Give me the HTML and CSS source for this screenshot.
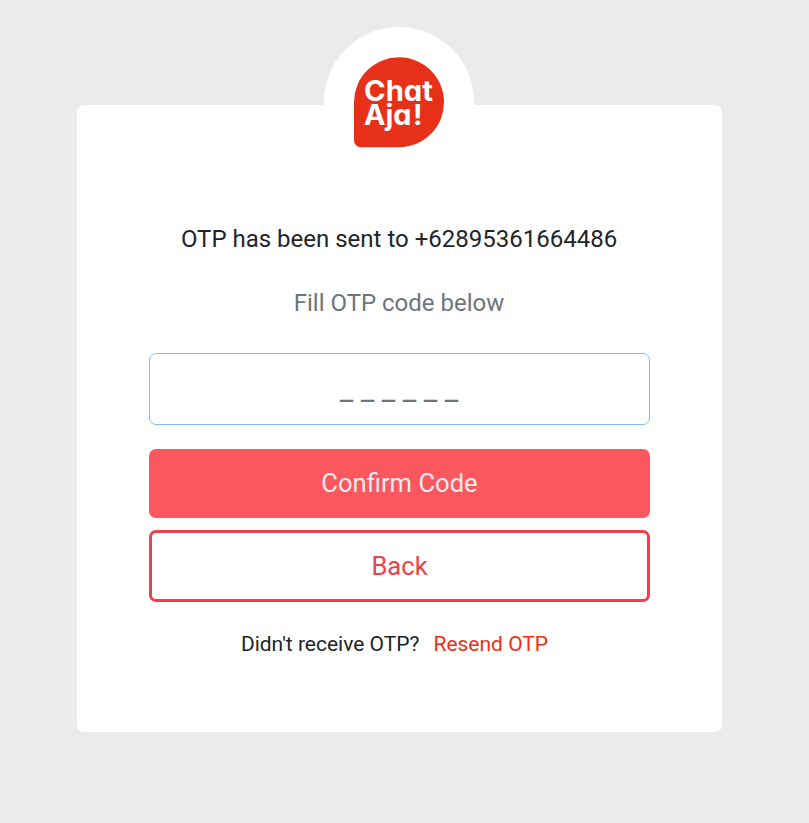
FILE: index.html
```html
<!DOCTYPE html>
<html lang="en">
<head>
<meta charset="utf-8">
<title>ChatAja OTP</title>
<link rel="stylesheet" href="styles.css">
</head>
<body>
<main class="card">
  <div class="badge">
    <svg class="logo" viewBox="0 0 90 90" role="img" aria-label="Chat Aja!">
      <path d="M45 .3a45 45 0 0 1 0 90H7a7 7 0 0 1-7-7V45A45 45 0 0 1 45 .3Z" fill="#e63118"/>
      <g class="logo-text">
        <text x="10" y="44.3" textLength="69" lengthAdjust="spacingAndGlyphs">Chat</text>
        <text x="10" y="68.3" textLength="47.5" lengthAdjust="spacingAndGlyphs">Aja</text>
        <text x="59" y="68.3">!</text>
      </g>
    </svg>
  </div>
  <p class="sent">OTP has been sent to +62895361664486</p>
  <p class="hint">Fill OTP code below</p>
  <form class="form">
    <input class="code" type="text" placeholder="_ _ _ _ _ _" aria-label="OTP code">
    <button class="btn confirm" type="button">Confirm Code</button>
    <button class="btn back" type="button">Back</button>
  </form>
  <p class="resend"><span>Didn't receive OTP?</span><a class="link">Resend OTP</a></p>
</main>
</body>
</html>
```
FILE: styles.css
```css
* { box-sizing: border-box; }
body {
  margin: 0;
  min-height: 823px;
  padding-top: 105px;
  background: #ebebeb;
  font-family: Roboto, sans-serif;
  color: #212529;
}
p { margin: 0; }
.card {
  width: 645px;
  height: 627px;
  margin-left: 77px;
  padding: 0 72px;
  background: #fff;
  border-radius: 7px;
  display: flex;
  flex-direction: column;
  align-items: center;
}
.badge {
  flex: none;
  width: 150px;
  height: 150px;
  margin-top: -78px;
  margin-right: 1px;
  padding: 30px;
  border-radius: 50%;
  background: #fff;
}
.logo { display: block; width: 90px; height: 90px; overflow: visible; }
.logo-text {
  font-family: Inter, sans-serif;
  font-size: 28px;
  font-weight: 700;
  font-feature-settings: "cv11";
  fill: #fff;
}
.sent, .hint {
  margin-right: 1px;
  font-size: 24px;
  line-height: 36px;
  white-space: nowrap;
}
.sent { margin-top: 44px; }
.hint { margin-top: 28px; color: #6c757d; }
.form {
  width: 501px;
  margin-top: 32px;
  display: flex;
  flex-direction: column;
}
.code {
  height: 72px;
  padding: 12px 25px 12px 24px;
  border: 1px solid #80bdff;
  border-radius: 7px;
  background: #fff;
  font: 30px Roboto, sans-serif;
  text-align: center;
  outline: none;
}
.code::placeholder { color: #6c757d; opacity: 1; }
.btn {
  border-radius: 7px;
  font: 25.6px/39px Roboto, sans-serif;
  text-align: center;
}
.confirm {
  height: 69px;
  margin-top: 24px;
  border: 0;
  background: #fb575e;
  color: #ebebeb;
}
.back {
  height: 72px;
  margin-top: 12px;
  border: 3px solid #ef414a;
  background: #fff;
  color: #ef414a;
}
.resend {
  display: flex;
  gap: 14px;
  margin: 27px 10px 0 0;
  font-size: 21px;
  line-height: 31px;
  white-space: nowrap;
}
.link { color: #e63118; }
```
